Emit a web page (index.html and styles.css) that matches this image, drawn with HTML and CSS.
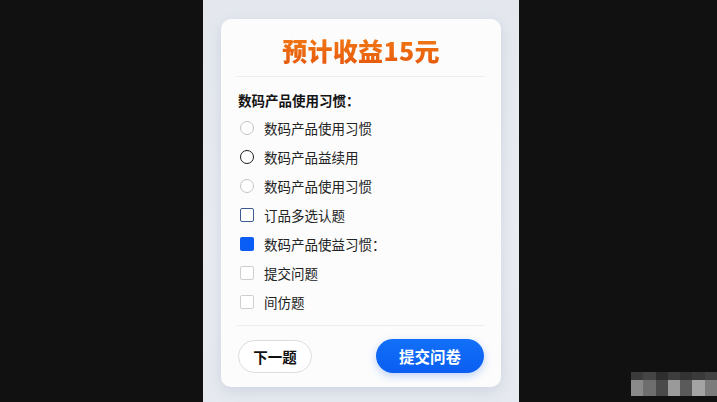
FILE: index.html
```html
<!DOCTYPE html>
<html lang="zh-CN">
<head>
<meta charset="utf-8">
<title>问卷</title>
<link rel="stylesheet" href="styles.css">
</head>
<body>
<div class="screen">
  <div class="phone">
    <div class="card">
      <div class="card-head">
        <h1 class="title">预计收益15元</h1>
      </div>
      <div class="card-body">
        <div class="question">数码产品使用习惯：</div>
        <ul class="options">
          <li class="opt"><span class="radio"></span><span class="label">数码产品使用习惯</span></li>
          <li class="opt"><span class="radio radio-dark"></span><span class="label">数码产品益续用</span></li>
          <li class="opt"><span class="radio"></span><span class="label">数码产品使用习惯</span></li>
          <li class="opt"><span class="check check-outline"></span><span class="label">订品多选认题</span></li>
          <li class="opt"><span class="check check-on"></span><span class="label">数码产品使益习惯：</span></li>
          <li class="opt"><span class="check"></span><span class="label">提交问题</span></li>
          <li class="opt"><span class="check"></span><span class="label">间仿题</span></li>
        </ul>
      </div>
      <div class="card-foot">
        <button class="btn btn-ghost">下一题</button>
        <button class="btn btn-primary">提交问卷</button>
      </div>
    </div>
  </div>
  <div class="mosaic">
    <span class="m m1"></span><span class="m m2"></span><span class="m m3"></span><span class="m m4"></span><span class="m m5"></span><span class="m m6"></span><span class="m m7"></span>
    <span class="m m8"></span><span class="m m9"></span><span class="m m10"></span><span class="m m11"></span><span class="m m12"></span><span class="m m13"></span><span class="m m14"></span>
  </div>
</div>
</body>
</html>
```
FILE: styles.css
```css
* { box-sizing: border-box; }
html, body { margin: 0; padding: 0; }
body {
  background: #111111;
  font-family: "Noto Sans CJK SC", "Noto Sans", sans-serif;
  width: 717px;
  height: 402px;
  overflow: hidden;
}
.screen {
  position: relative;
  width: 717px;
  height: 402px;
  display: flex;
}
.phone {
  margin-left: 203px;
  width: 316px;
  height: 402px;
  background: linear-gradient(180deg, #e4e8ee 0%, #e9ecf1 60%, #e6e9ef 100%);
  padding: 19px 18px 0 18px;
}
.card {
  width: 280px;
  height: 368px;
  background: #fcfcfc;
  border-radius: 10px;
  box-shadow: 0 4px 14px rgba(120, 140, 175, 0.22);
  padding: 0 16px 0 16px;
  display: flex;
  flex-direction: column;
}
.card-head {
  height: 58px;
  border-bottom: 1px solid #eeeeee;
  display: flex;
  align-items: center;
  justify-content: center;
  padding-top: 4px;
}
.title {
  margin: 0;
  font-size: 25px;
  font-weight: 900;
  line-height: 30px;
  letter-spacing: 0.3px;
  background: linear-gradient(180deg, #f27a14 0%, #e65a0c 100%);
  -webkit-background-clip: text;
  background-clip: text;
  color: transparent;
}
.card-body {
  padding-left: 1px;
}
.question {
  margin-top: 12px;
  font-size: 13.5px;
  font-weight: 700;
  line-height: 22px;
  color: #141414;
}
.options {
  list-style: none;
  margin: 2px 0 0 0;
  padding: 0;
}
.opt {
  height: 29px;
  display: flex;
  align-items: center;
  gap: 10px;
  padding-left: 2px;
}
.label {
  font-size: 13.5px;
  color: #222222;
  line-height: 20px;
}
.radio {
  width: 14px;
  height: 14px;
  border-radius: 50%;
  border: 1px solid #c4c4c4;
  background: #ffffff;
  flex: none;
}
.radio-dark {
  border: 1.5px solid #1c1c1c;
}
.check {
  width: 14px;
  height: 14px;
  border-radius: 2px;
  border: 1px solid #cfcfcf;
  background: #ffffff;
  flex: none;
}
.check-outline {
  border: 1.5px solid #3d5a95;
}
.check-on {
  border: none;
  background: #0a5ef5;
}
.card-foot {
  margin-top: 9px;
  border-top: 1px solid #eeeeee;
  padding-top: 13px;
  display: flex;
  justify-content: space-between;
  align-items: center;
}
.btn {
  font-family: "Noto Sans CJK SC", "Noto Sans", sans-serif;
  border-radius: 17px;
  height: 34px;
  cursor: pointer;
  padding: 0;
}
.btn-ghost {
  width: 74px;
  height: 33px;
  margin-left: 1px;
  background: #ffffff;
  border: 1px solid #dcdcdc;
  font-size: 14.5px;
  font-weight: 700;
  color: #111111;
}
.btn-primary {
  width: 108px;
  margin-right: 1px;
  background: linear-gradient(180deg, #1270f8 0%, #0a5ef2 100%);
  border: none;
  color: #ffffff;
  font-size: 15.5px;
  font-weight: 700;
  box-shadow: 0 3px 8px rgba(20, 100, 240, 0.28);
}
.mosaic {
  position: absolute;
  left: 631px;
  top: 372px;
  width: 86px;
  height: 24px;
  display: grid;
  grid-template-columns: repeat(7, 1fr);
  grid-template-rows: 8px 16px;
}
.m { display: block; }
.m1 { background: #3b3b3b; }
.m2 { background: #454545; }
.m3 { background: #2e2e2e; }
.m4 { background: #3d3d3d; }
.m5 { background: #333333; }
.m6 { background: #3a3a3a; }
.m7 { background: #424242; }
.m8 { background: #8a8a8a; }
.m9 { background: #6e6e6e; }
.m10 { background: #4a4a4a; }
.m11 { background: #9a9a9a; }
.m12 { background: #5a5a5a; }
.m13 { background: #a4a4a4; }
.m14 { background: #7c7c7c; }
```
